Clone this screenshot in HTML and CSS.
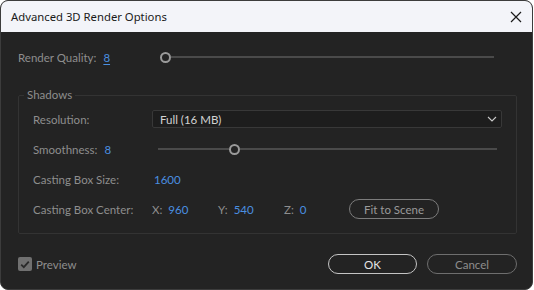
FILE: index.html
```html
<!DOCTYPE html>
<html>
<head>
<meta charset="utf-8">
<link rel="stylesheet" href="styles.css">
</head>
<body>
<div class="window">
  <div class="titlebar">
    <span class="title">Advanced 3D Render Options</span>
    <svg class="close" width="12" height="12" viewBox="0 0 12 12"><path d="M1 1L11 11M11 1L1 11" stroke="#1a1a1a" stroke-width="1.2" fill="none"/></svg>
  </div>
  <div class="body">
    <div class="row-top">
      <div class="lab-cell"><span class="label">Render Quality:</span><span class="val link">8</span></div>
      <div class="slider"><span class="knob"></span><span class="track"></span></div>
    </div>
    <fieldset class="group">
      <legend class="legend">Shadows</legend>
      <div class="grow">
        <span class="label">Resolution:</span>
        <div class="select"><span class="sel-text">Full (16 MB)</span>
          <svg class="chev" width="10" height="6" viewBox="0 0 10 6"><path d="M1 1L5 5L9 1" stroke="#c8c8c8" stroke-width="1.1" fill="none"/></svg>
        </div>
      </div>
      <div class="grow">
        <span class="label">Smoothness:<span class="val">8</span></span>
        <div class="slider slider2"><span class="track short"></span><span class="knob"></span><span class="track"></span></div>
      </div>
      <div class="grow">
        <span class="label">Casting Box Size:</span>
        <span class="val flat">1600</span>
      </div>
      <div class="grow">
        <span class="label">Casting Box Center:</span>
        <div class="coords">
          <span class="coord"><span class="axis">X:</span><span class="val">960</span></span>
          <span class="coord"><span class="axis">Y:</span><span class="val">540</span></span>
          <span class="coord last"><span class="axis">Z:</span><span class="val">0</span></span>
          <button class="btn fit">Fit to Scene</button>
        </div>
      </div>
    </fieldset>
    <div class="footer">
      <label class="check">
        <span class="box"><svg width="10" height="9" viewBox="0 0 10 9"><path d="M1.2 4.6L3.8 7.2L8.8 1.6" stroke="#2a2a2a" stroke-width="1.8" fill="none"/></svg></span>
        <span class="check-text">Preview</span>
      </label>
      <div class="actions">
        <button class="btn ok">OK</button>
        <button class="btn cancel">Cancel</button>
      </div>
    </div>
  </div>
</div>
</body>
</html>
```
FILE: styles.css
```css
html, body {
  margin: 0;
  padding: 0;
  background: #ffffff;
}
.window {
  width: 533px;
  height: 290px;
  box-sizing: border-box;
  border: 1px solid #3c3c3c;
  border-radius: 8px;
  overflow: hidden;
  background: #232323;
  display: flex;
  flex-direction: column;
  font-family: Lato, "Noto Sans", sans-serif;
  font-size: 11.5px;
  color: #8e8e8e;
}
.titlebar {
  height: 31px;
  flex: none;
  background: #f3f4f9;
  display: flex;
  align-items: center;
  justify-content: space-between;
  padding: 0 10px 0 10px;
}
.title {
  font-family: "Noto Sans", sans-serif;
  font-size: 11.3px;
  color: #1a1a1a;
}
.close {
  display: block;
}
.body {
  flex: 1;
  display: flex;
  flex-direction: column;
  padding: 0 15px 0 17px;
}
.row-top {
  margin-top: 15px;
  height: 20px;
  display: flex;
  align-items: center;
  padding-right: 23px;
}
.lab-cell {
  width: 142px;
  flex: none;
  display: flex;
  align-items: center;
}
.label {
  white-space: nowrap;
}
.val {
  color: #4a8fe0;
  margin-left: 7px;
}
.val.flat {
  margin-left: 2px;
}
.link {
  text-decoration: underline;
  text-underline-offset: 2px;
}
.slider {
  flex: 1;
  display: flex;
  align-items: center;
  height: 12px;
}
.knob {
  width: 11px;
  height: 11px;
  box-sizing: border-box;
  border: 2px solid #9a9a9a;
  border-radius: 50%;
  flex: none;
}
.track {
  flex: 1;
  height: 2px;
  background: #4a4a4a;
}
.track.short {
  flex: none;
  width: 71px;
}
.group {
  margin: 20px 0 0 0;
  border: 1px solid #333333;
  border-radius: 2px;
  padding: 1px 14px 9px 14px;
  min-width: 0;
}
.legend {
  margin-left: -9px;
  padding: 0 3px;
  line-height: 16px;
  color: #8e8e8e;
}
.grow {
  height: 30px;
  display: grid;
  grid-template-columns: 119px 1fr;
  align-items: center;
}
.select {
  height: 18px;
  box-sizing: border-box;
  border: 1px solid #383838;
  border-radius: 2px;
  background: #1d1d1d;
  display: flex;
  align-items: center;
  justify-content: space-between;
  padding: 0 4px 0 7px;
}
.sel-text {
  color: #d2d2d2;
}
.chev {
  display: block;
}
.slider2 {
  margin: 0 5px 0 6px;
}
.coords {
  display: flex;
  align-items: center;
}
.coord {
  width: 66px;
  display: flex;
  align-items: center;
}
.coord.last {
  width: 65px;
}
.axis {
  color: #8e8e8e;
}
.coord .val {
  margin-left: 6px;
}
.btn {
  font-family: Lato, "Noto Sans", sans-serif;
  font-size: 11.5px;
  height: 20px;
  border-radius: 10px;
  background: transparent;
  padding: 0;
  box-sizing: border-box;
}
.fit {
  width: 90px;
  border: 1px solid #7c7c7c;
  color: #9a9a9a;
}
.footer {
  margin-top: 20px;
  height: 20px;
  display: flex;
  align-items: center;
  justify-content: space-between;
}
.check {
  display: flex;
  align-items: center;
}
.box {
  width: 14px;
  height: 14px;
  border-radius: 2px;
  background: #707070;
  display: flex;
  align-items: center;
  justify-content: center;
}
.box svg {
  display: block;
}
.check-text {
  margin-left: 4px;
  color: #8e8e8e;
}
.actions {
  display: flex;
  gap: 10px;
}
.ok {
  width: 89px;
  border: 1.5px solid #c4c4c4;
  color: #e6e6e6;
}
.cancel {
  width: 90px;
  border: 1.5px solid #6e6e6e;
  color: #8e8e8e;
}
```
